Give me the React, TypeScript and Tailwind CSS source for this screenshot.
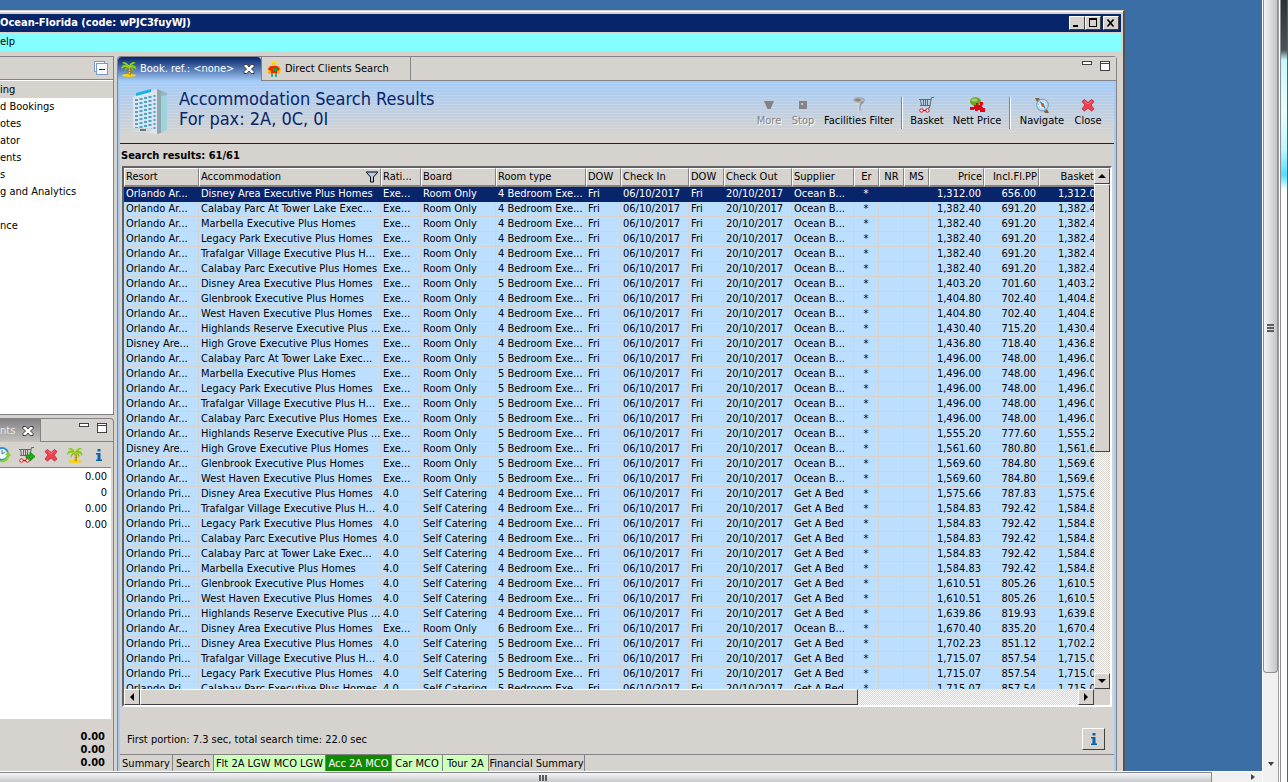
import type { ReactNode } from "react";
import clsx from "clsx";

type Row = {
  resort: string;
  name: string;
  rating: string;
  board: string;
  beds: number;
  supplier: string;
  price: string;
  pp: string;
};

const AR = "Orlando Ar...";
const PRI = "Orlando Pri...";
const DIS = "Disney Are...";

const DISNEY = "Disney Area Executive Plus Homes";
const TOWER = "Calabay Parc At Tower Lake Exec...";
const MARBELLA = "Marbella Executive Plus Homes";
const LEGACY = "Legacy Park Executive Plus Homes";
const TRAFALGAR = "Trafalgar Village Executive Plus H...";
const CALABAY = "Calabay Parc Executive Plus Homes";
const GLENBROOK = "Glenbrook Executive Plus Homes";
const WEST = "West Haven Executive Plus Homes";
const HIGHLANDS = "Highlands Reserve Executive Plus ...";
const GROVE = "High Grove Executive Plus Homes";

function ocean(resort: string, name: string, beds: number, price: string, pp: string): Row {
  return { resort, name, rating: "Exe...", board: "Room Only", beds, supplier: "Ocean B...", price, pp };
}

function getABed(name: string, beds: number, price: string, pp: string): Row {
  return { resort: PRI, name, rating: "4.0", board: "Self Catering", beds, supplier: "Get A Bed", price, pp };
}

const rows: Row[] = [
  ocean(AR, DISNEY, 4, "1,312.00", "656.00"),
  ocean(AR, TOWER, 4, "1,382.40", "691.20"),
  ocean(AR, MARBELLA, 4, "1,382.40", "691.20"),
  ocean(AR, LEGACY, 4, "1,382.40", "691.20"),
  ocean(AR, TRAFALGAR, 4, "1,382.40", "691.20"),
  ocean(AR, CALABAY, 4, "1,382.40", "691.20"),
  ocean(AR, DISNEY, 5, "1,403.20", "701.60"),
  ocean(AR, GLENBROOK, 4, "1,404.80", "702.40"),
  ocean(AR, WEST, 4, "1,404.80", "702.40"),
  ocean(AR, HIGHLANDS, 4, "1,430.40", "715.20"),
  ocean(DIS, GROVE, 4, "1,436.80", "718.40"),
  ocean(AR, TOWER, 5, "1,496.00", "748.00"),
  ocean(AR, MARBELLA, 5, "1,496.00", "748.00"),
  ocean(AR, LEGACY, 5, "1,496.00", "748.00"),
  ocean(AR, TRAFALGAR, 5, "1,496.00", "748.00"),
  ocean(AR, CALABAY, 5, "1,496.00", "748.00"),
  ocean(AR, HIGHLANDS, 5, "1,555.20", "777.60"),
  ocean(DIS, GROVE, 5, "1,561.60", "780.80"),
  ocean(AR, GLENBROOK, 5, "1,569.60", "784.80"),
  ocean(AR, WEST, 5, "1,569.60", "784.80"),
  getABed(DISNEY, 4, "1,575.66", "787.83"),
  getABed(TRAFALGAR, 4, "1,584.83", "792.42"),
  getABed(LEGACY, 4, "1,584.83", "792.42"),
  getABed(CALABAY, 4, "1,584.83", "792.42"),
  getABed("Calabay Parc at Tower Lake Exec...", 4, "1,584.83", "792.42"),
  getABed(MARBELLA, 4, "1,584.83", "792.42"),
  getABed(GLENBROOK, 4, "1,610.51", "805.26"),
  getABed(WEST, 4, "1,610.51", "805.26"),
  getABed(HIGHLANDS, 4, "1,639.86", "819.93"),
  ocean(AR, DISNEY, 6, "1,670.40", "835.20"),
  getABed(DISNEY, 5, "1,702.23", "851.12"),
  getABed(TRAFALGAR, 5, "1,715.07", "857.54"),
  getABed(LEGACY, 5, "1,715.07", "857.54"),
  getABed(CALABAY, 5, "1,715.07", "857.54"),
];

const columns = [
  { label: "Resort", width: "w-[75px]" },
  { label: "Accommodation", width: "w-[182px]", filter: true },
  { label: "Rati...", width: "w-[40px]" },
  { label: "Board", width: "w-[75px]" },
  { label: "Room type", width: "w-[90px]" },
  { label: "DOW", width: "w-[35px]" },
  { label: "Check In", width: "w-[68px]" },
  { label: "DOW", width: "w-[35px]" },
  { label: "Check Out", width: "w-[68px]" },
  { label: "Supplier", width: "w-[62px]" },
  { label: "Er", width: "w-[25px]", align: "text-center" },
  { label: "NR", width: "w-[25px]", align: "text-center" },
  { label: "MS", width: "w-[25px]", align: "text-center" },
  { label: "Price", width: "w-[55px]", align: "text-right" },
  { label: "Incl.Fl.PP", width: "w-[55px]", align: "text-right" },
  { label: "Basket P", width: "w-[66px]", align: "text-right" },
];

const RAISED = "border border-t-white border-l-white border-r-[#424142] border-b-[#424142] bg-[#d6d3ce]";
const DITHER = "bg-[repeating-conic-gradient(#ffffff_0_25%,#d6d3ce_0_50%)] bg-[length:2px_2px]";

/* ---------- icons ---------- */

function PalmIcon() {
  return (
    <svg viewBox="0 0 16 16" className="h-4 w-4 shrink-0" aria-hidden="true">
      <ellipse cx="8" cy="14.4" rx="7" ry="1.6" fill="#f7d308" />
      <path d="M8 5c1 3 1.200 6 .6 9" stroke="#b57900" strokeWidth="2" fill="none" />
      <path d="M8.300 6v8" stroke="#ffdb21" strokeWidth="1" fill="none" strokeDasharray="1.500 1" />
      <path
        d="M8 5C6 1 3 0 1 2c2 0 3 1 4 2-3-1-5 1-5 4 2-2 4-2 6-2-2 1-3 3-2 5 1-3 3-4 4-5 2 1 3 2 4 5 1-3 0-4-2-5 2 0 4 1 5 3 1-3-1-5-4-5 1-1 2-2 4-2-2-2-5-1-7 3z"
        fill="#7bc308"
      />
      <path d="M2 2c2 0 4 1 6 3 1-2 3-3 5-3M1 7c2-2 5-2 7-1 2-1 4 0 6 1" stroke="#a5e321" strokeWidth=".8" fill="none" />
    </svg>
  );
}

function PersonIcon() {
  return (
    <svg viewBox="0 0 16 16" className="h-4 w-4 shrink-0" aria-hidden="true">
      <path d="M3 5h10l2 4-1 3-3 1H5l-3-1-1-3z" fill="#ffa21c" />
      <path d="M5 5h6l3 3-2 2-1-1v3H5V9l-1 1-2-2z" fill="#e72800" />
      <path d="M6 2h4v3H6z" fill="#ffc34a" />
      <path d="M5 2 6 0h4l1 2z" fill="#ffdf00" />
      <path d="M7 7h4v3H7z" fill="#319a31" />
      <path d="M5 12h2v4H5zM9 12h2v4H9z" fill="#21b2b5" />
      <path d="M1 9h2v2H1zM13 9h2v2h-2zM7 12h2v2H7z" fill="#ffdf00" />
    </svg>
  );
}

function HotelIcon() {
  return (
    <svg viewBox="0 0 34 46" className="h-[46px] w-[34px] shrink-0" aria-hidden="true">
      <path d="M0 9 24 1v45L0 43z" fill="#dbe5ea" />
      <path d="m24 1 10 4v37l-10 4z" fill="#8fbac4" />
      <path d="m24 1 4 2v42l-4 1z" fill="#93a5ad" />
      <path d="m28 8 6-1v35l-6 2z" fill="#9fdbe3" opacity=".8" />
      <path d="m3 5 15-4v3L3 8z" fill="#18b2ef" />
      <g fill="none" stroke="#4aa3d3" strokeWidth="3" strokeDasharray="2 2">
        <path d="M3.500 11v30" />
        <path d="M8 10v31" />
        <path d="M12.500 9v32" />
        <path d="M17 8v33" />
        <path d="M21.500 7v35" strokeWidth="2" />
      </g>
      <path d="M0 40h18v4L0 43z" fill="#ced7dc" />
      <path d="M7 41h6v2H7z" fill="#6b757b" />
    </svg>
  );
}

function CartIcon({ arrow = false }: { arrow?: boolean }) {
  return (
    <svg viewBox="0 0 16 16" className="h-4 w-4 shrink-0" aria-hidden="true">
      <path
        d="M0 2.500h12M1 8.500h10M1.500 2.500l1 6M4.500 2.500v6M6.500 2.500v6M8.500 2.500v6M15 .5h-2.500l-2 10.500H9"
        stroke="#63696b"
        fill="none"
      />
      <circle cx="2.500" cy="13.500" r="1.700" fill="#fff" stroke="#e70000" />
      <circle cx="8.500" cy="13.500" r="1.700" fill="#fff" stroke="#e70000" />
      <path d="M4 13.500h3" stroke="#e70000" />
      {arrow ? <path d="M7 8h4V5l5 4.500-5 4.500v-3H7z" fill="#18b210" stroke="#007900" strokeWidth=".7" /> : null}
    </svg>
  );
}

function RedCross() {
  return (
    <svg viewBox="0 0 16 16" className="h-4 w-4 shrink-0" aria-hidden="true">
      <path
        d="m4.500 2.500 3.500 3 3.500-3 2.500 2-3 3.500 3 4-2.500 2-3.500-3-3.500 3-2.500-2 3-4-3-3.500z"
        fill="#ef4152"
        stroke="#c62031"
        strokeWidth=".8"
      />
      <path d="m4.500 4 3.500 3 3.500-3" stroke="#f77982" fill="none" />
    </svg>
  );
}

function InfoIcon() {
  return (
    <svg viewBox="0 0 16 16" className="h-4 w-4 shrink-0" aria-hidden="true">
      <path d="M6.500 2h3v2.500h-3zM5 6h4.500v6.500H11V14H5v-1.500h1.500v-5H5z" fill="#0865ad" />
    </svg>
  );
}

function ClockIcon() {
  return (
    <svg viewBox="0 0 16 16" className="h-4 w-4 shrink-0" aria-hidden="true">
      <circle cx="7" cy="7" r="6" fill="#f7fbff" stroke="#2992e7" strokeWidth="2" />
      <path d="M7 3v4l3-2" stroke="#4a7194" fill="none" />
      <path d="M1 12c5 3 10 1 11-4h-2l3.500-4L16 9h-1.500c-1 6-8 9-13.500 3z" fill="#8cd321" />
    </svg>
  );
}

function FunnelIcon() {
  return (
    <svg viewBox="0 0 16 16" className="h-4 w-4" aria-hidden="true">
      <path d="M3 3c0 3 3.500 4 3.500 6v6l2-1V9c0-2 4.500-3 4.500-6z" fill="#d6d7d6" />
      <path d="M8.500 8v6l1-.5V9c0-2 4-3 4-6l-3 1z" fill="#8c8e8c" />
      <ellipse cx="8" cy="3" rx="5.500" ry="2.400" fill="#b5b6b5" stroke="#9c9a9c" strokeWidth=".7" />
      <ellipse cx="7" cy="3" rx="3" ry="1.200" fill="#848284" />
    </svg>
  );
}

function NettPriceIcon() {
  return (
    <svg viewBox="0 0 16 16" className="h-4 w-4" aria-hidden="true">
      <ellipse cx="6.500" cy="4.500" rx="5.500" ry="4.200" fill="#6ba621" />
      <ellipse cx="5.500" cy="3" rx="3" ry="1.500" fill="#a5cf6b" />
      <path d="M1 10h4V8h2V6h2v2h2V5h3v3h-1v2h1v1h2v4h-5v-2H9v1H6v-2H5v1H1z" fill="#e70018" />
      <path d="m5 12 2-2M10 8v3m2 1 1 1" stroke="#8c1010" strokeWidth=".8" />
    </svg>
  );
}

function CompassIcon() {
  return (
    <svg viewBox="0 0 16 16" className="h-4 w-4" aria-hidden="true">
      <path d="M1 1h4l2 3-3 3zM15 16h-4l-2-3 3-3z" fill="#846139" />
      <circle cx="8.500" cy="8" r="5.800" fill="#e7f3fb" stroke="#8ca6bd" strokeWidth="1.400" />
      <circle cx="8.500" cy="8" r="4" fill="none" stroke="#5ab6e7" strokeWidth=".8" strokeDasharray="2 1" />
      <path d="m5.500 4 4.500 3-2 2z" fill="#1882ce" />
      <path d="m11.500 12-3.500-3 2-2z" fill="#1882ce" />
      <path d="M7.500 6.500h2.500v3H7.500z" fill="#f74a21" />
    </svg>
  );
}

function TabClose() {
  return (
    <svg viewBox="0 0 12 12" className="h-3 w-3" aria-hidden="true">
      <path
        d="M1 1.500h3l2 2.500 2-2.500h3v2L8.500 6l2.500 2.500v2H8L6 8l-2 2.500H1v-2L3.500 6 1 3.500z"
        fill="#fff"
        stroke="#424142"
      />
    </svg>
  );
}

function ViewControls() {
  return (
    <div className="flex items-start gap-2">
      <button type="button" aria-label="Minimize view" className="mt-1 block h-1 w-[10px] border border-[#424142] bg-white" />
      <button
        type="button"
        aria-label="Maximize view"
        className="mt-1 flex h-[10px] w-[10px] flex-col border border-[#424142] bg-white pt-px"
      >
        <span className="h-px w-full bg-[#424142]" />
      </button>
    </div>
  );
}

/* ---------- title bar ---------- */

function WindowButton({ label, children }: { label: string; children: ReactNode }) {
  return (
    <button type="button" aria-label={label} className={clsx("flex h-[14px] w-4 items-center justify-center", RAISED)}>
      <svg viewBox="0 0 12 10" className="h-[10px] w-3" fill="none" stroke="#000" shapeRendering="crispEdges">
        {children}
      </svg>
    </button>
  );
}

function TitleBar() {
  return (
    <div className="flex h-[18px] items-center bg-[#08246b] pr-[2px] text-white">
      <h1 className="flex-1 text-[11px] font-bold">Ocean-Florida (code: wPJC3fuyWJ)</h1>
      <WindowButton label="Minimize">
        <path d="M2 8h5" strokeWidth="2" />
      </WindowButton>
      <WindowButton label="Maximize">
        <path d="M2 1h8" strokeWidth="2" />
        <path d="M2.500 1v7.500h7V1" />
      </WindowButton>
      <div className="w-[2px]" />
      <WindowButton label="Close">
        <path d="m2.500 1.500 6 7m0-7-6 7" strokeWidth="1.700" shapeRendering="auto" />
      </WindowButton>
    </div>
  );
}

/* ---------- left column ---------- */

const navItems = ["ing", "d Bookings", "otes", "ator", "ents", "s", "g and Analytics", "", "nce"];

function NavigationView() {
  return (
    <section className="flex h-[359px] shrink-0 flex-col border-y border-r border-[#848284] bg-white">
      <div className="flex h-[23px] items-center justify-end border-b border-[#848284] bg-[#d6d3ce] pr-[5px]">
        <button type="button" aria-label="Collapse all">
          <svg viewBox="0 0 14 14" className="h-[14px] w-[14px]" fill="#f7fbff" stroke="#7b9ac6" shapeRendering="crispEdges">
            <path d="M.5.5h10v10H.5z" />
            <path d="M2.500 2.500h11v11h-11z" />
            <path d="M5 8h6" stroke="#08387b" />
          </svg>
        </button>
      </div>
      <ul className="pt-px">
        {navItems.map((item, i) => (
          <li key={i} className={clsx("h-[17px] leading-[18px]", i === 0 && "bg-[#d6d3ce]")}>
            {item}
          </li>
        ))}
      </ul>
    </section>
  );
}

function ElementsView() {
  return (
    <section className="flex min-h-0 flex-1 flex-col rounded-tr border-t border-r border-[#848284]">
      <div className="flex h-[23px] shrink-0">
        <div className="flex w-[41px] items-center gap-[7px] border-r border-[#848284] bg-linear-to-b from-[#848284] to-[#c6c3bd] text-[#e7e7e7]">
          <span>nts</span>
          <button type="button" aria-label="Close tab">
            <TabClose />
          </button>
        </div>
        <div className="flex flex-1 justify-end border-b border-[#848284] pr-[6px]">
          <ViewControls />
        </div>
      </div>
      <div className="mr-[2px] flex h-[26px] shrink-0 items-center justify-end gap-2 overflow-hidden border-b border-[#848284] pr-1">
        <button type="button" aria-label="History"><ClockIcon /></button>
        <button type="button" aria-label="Add to basket"><CartIcon arrow /></button>
        <button type="button" aria-label="Remove"><RedCross /></button>
        <button type="button" aria-label="Holiday"><PalmIcon /></button>
        <button type="button" aria-label="Info"><InfoIcon /></button>
      </div>
      <div className="mr-[2px] flex-1 bg-white pt-px pr-1 text-right leading-4">
        <p>0.00</p>
        <p>0</p>
        <p>0.00</p>
        <p>0.00</p>
      </div>
      <div className="mr-2 h-[52px] shrink-0 pt-[11px] text-right leading-[13px] font-bold">
        <p>0.00</p>
        <p>0.00</p>
        <p>0.00</p>
      </div>
    </section>
  );
}

/* ---------- main editor ---------- */

function EditorTabs() {
  return (
    <div className="flex h-6 shrink-0 text-[11px]">
      <div className="flex w-[143px] items-center gap-[3px] rounded-tl rounded-tr bg-linear-to-b from-[#08246b] to-[#a5cbf7] pl-[3px] text-white">
        <PalmIcon />
        <span className="flex-1 whitespace-nowrap">Book. ref.: &lt;none&gt;</span>
        <button type="button" aria-label="Close tab" className="mr-[6px]">
          <TabClose />
        </button>
      </div>
      <button
        type="button"
        className="flex w-[150px] items-center gap-[3px] border-r border-b border-l border-[#848284] bg-[#d6d3ce] pl-1 whitespace-nowrap"
      >
        <PersonIcon />
        Direct Clients Search
      </button>
      <div className="flex flex-1 justify-end border-b border-[#848284] bg-[#d6d3ce] pr-[6px]">
        <ViewControls />
      </div>
    </div>
  );
}

function ToolButton({ label, width, icon, disabled }: { label: string; width: string; icon: ReactNode; disabled?: boolean }) {
  return (
    <button
      type="button"
      disabled={disabled}
      className={clsx(
        "flex flex-col items-center whitespace-nowrap",
        width,
        disabled && "text-[#848284] [text-shadow:1px_1px_0_#ffffff]",
      )}
    >
      <span className="flex h-[17px] items-center">{icon}</span>
      <span className="leading-4">{label}</span>
    </button>
  );
}

function ToolSeparator() {
  return <div className="mx-[3px] h-8 w-[2px] border-l border-[#848284] border-r border-r-white" />;
}

function ResultsHeader() {
  return (
    <header className="flex h-[63px] shrink-0 items-start border-b border-[#08246b] bg-[repeating-linear-gradient(to_bottom,transparent_0_2px,rgba(255,255,255,0.120)_2px_3px),linear-gradient(to_bottom,#a5cbf7,#d6d3ce_90%)] pl-[13px]">
      <div className="pt-[7px]">
        <HotelIcon />
      </div>
      <h2 className="flex-1 pt-2 pl-3 text-[18px] leading-5 whitespace-nowrap text-[#08246b]">
        Accommodation Search Results
        <br />
        For pax: 2A, 0C, 0I
      </h2>
      <div className="flex shrink-0 items-center pt-[15px] pr-2">
        <ToolButton
          label="More"
          width="w-[34px]"
          disabled
          icon={
            <svg viewBox="0 0 10 10" className="h-[10px] w-[10px]">
              <path d="M0 1h10L6.500 9h-3z" fill="#848284" />
            </svg>
          }
        />
        <ToolButton
          label="Stop"
          width="w-[34px]"
          disabled
          icon={
            <svg viewBox="0 0 8 8" className="h-2 w-2">
              <path d="M0 0h8v8H0z" fill="#848284" />
              <path d="M2 2h2v2H2z" fill="#bdc7d6" />
            </svg>
          }
        />
        <ToolButton label="Facilities Filter" width="w-[78px]" icon={<FunnelIcon />} />
        <ToolSeparator />
        <ToolButton label="Basket" width="w-[42px]" icon={<CartIcon />} />
        <ToolButton label="Nett Price" width="w-[58px]" icon={<NettPriceIcon />} />
        <ToolSeparator />
        <ToolButton label="Navigate" width="w-[56px]" icon={<CompassIcon />} />
        <ToolButton label="Close" width="w-[36px]" icon={<RedCross />} />
      </div>
    </header>
  );
}

function ScrollArrow({ label, path }: { label: string; path: string }) {
  return (
    <button type="button" aria-label={label} className={clsx("flex h-4 w-4 shrink-0 items-center justify-center", RAISED)}>
      <svg viewBox="0 0 8 8" className="h-2 w-2" aria-hidden="true">
        <path d={path} fill="#000" />
      </svg>
    </button>
  );
}

function ResultsTable() {
  return (
    <div className="mx-[2px] flex min-h-0 flex-1 flex-col border-2 border-t-[#636163] border-r-white border-b-white border-l-[#636163]">
      <div className="flex min-h-0 flex-1">
        <div className="min-w-0 flex-1 overflow-hidden bg-white">
          <table className="w-[981px] table-fixed border-separate border-spacing-0">
            <thead>
              <tr>
                {columns.map((c, i) => (
                  <th
                    key={i}
                    scope="col"
                    className={clsx(
                      "h-[19px] overflow-hidden border-t border-r border-b-2 border-l border-t-white border-r-[#848284] border-b-[#848284] border-l-white bg-[#d6d3ce] px-px py-0 leading-4 font-normal whitespace-nowrap",
                      c.width,
                      c.align ?? "text-left",
                    )}
                  >
                    {c.filter ? (
                      <span className="flex items-center justify-between">
                        {c.label}
                        <svg viewBox="0 0 14 12" className="h-3 w-[14px]" aria-hidden="true">
                          <path d="M1 1h12L8.500 6v5h-3V6z" fill="#b5cbe7" stroke="#000" />
                        </svg>
                      </span>
                    ) : (
                      c.label
                    )}
                  </th>
                ))}
              </tr>
            </thead>
            <tbody>
              {rows.map((r, i) => {
                const cells = [
                  r.resort,
                  r.name,
                  r.rating,
                  r.board,
                  `${r.beds} Bedroom Exe...`,
                  "Fri",
                  "06/10/2017",
                  "Fri",
                  "20/10/2017",
                  r.supplier,
                  "*",
                  "",
                  "",
                  r.price,
                  r.pp,
                  r.price,
                ];
                return (
                  <tr key={i} className={i === 0 ? "bg-[#08246b] text-white" : "bg-[#bddfff]"}>
                    {cells.map((cell, j) => (
                      <td
                        key={j}
                        className={clsx(
                          "h-[15px] overflow-hidden border-r border-b px-[2px] py-0 leading-[14px] whitespace-nowrap",
                          i === 0 ? "border-[#08246b]" : "border-[#d6d3ce]",
                          columns[j].align,
                        )}
                      >
                        {cell}
                      </td>
                    ))}
                  </tr>
                );
              })}
            </tbody>
          </table>
        </div>
        <div className={clsx("flex w-4 shrink-0 flex-col", DITHER)}>
          <ScrollArrow label="Scroll up" path="M0 6h8L4 2z" />
          <div className={clsx("h-[268px]", RAISED)} />
          <div className="flex-1" />
          <ScrollArrow label="Scroll down" path="M0 2h8L4 6z" />
        </div>
      </div>
      <div className="flex h-4 shrink-0">
        <div className={clsx("flex flex-1", DITHER)}>
          <ScrollArrow label="Scroll left" path="M6 0v8L2 4z" />
          <div className={clsx("w-[74%]", RAISED)} />
          <div className="flex-1" />
          <ScrollArrow label="Scroll right" path="M2 0v8l4-4z" />
        </div>
        <div className="w-4 bg-[#d6d3ce]" />
      </div>
    </div>
  );
}

const pageTabs = [
  { label: "Summary", width: "w-[53px]", tone: "" },
  { label: "Search", width: "w-[41px]", tone: "" },
  { label: "Flt 2A LGW MCO LGW", width: "w-[112px]", tone: "bg-[#ceffbd]" },
  { label: "Acc 2A MCO", width: "w-[66px]", tone: "bg-[#108a00] text-white" },
  { label: "Car MCO", width: "w-[51px]", tone: "bg-[#ceffbd]" },
  { label: "Tour 2A", width: "w-[46px]", tone: "bg-[#ceffbd]" },
  { label: "Financial Summary", width: "w-[96px]", tone: "" },
];

function Editor() {
  return (
    <main className="flex min-w-0 flex-1 flex-col rounded-t border-x border-t border-[#848284] bg-[#a5cbf7]">
      <EditorTabs />
      <div className="mx-[2px] flex min-h-0 flex-1 flex-col bg-[#d6d3ce]">
        <ResultsHeader />
        <p className="h-[22px] shrink-0 pl-px leading-6 font-bold">Search results: 61/61</p>
        <ResultsTable />
        <div className="flex h-[47px] shrink-0 items-end justify-between pr-[9px] pb-1 pl-[7px]">
          <p className="pb-[2px] leading-4">First portion: 7.3 sec, total search time: 22.0 sec</p>
          <button type="button" aria-label="Search info" className={clsx("flex h-[22px] w-[23px] items-center justify-center", RAISED)}>
            <InfoIcon />
          </button>
        </div>
        <nav className="flex h-[17px] shrink-0 border-t border-[#848284]">
          {pageTabs.map((t) => (
            <button
              key={t.label}
              type="button"
              className={clsx("border-r border-[#848284] pt-px leading-4 whitespace-nowrap", t.width, t.tone)}
            >
              {t.label}
            </button>
          ))}
        </nav>
      </div>
    </main>
  );
}

/* ---------- viewer scroll bars ---------- */

function ViewerScrollX() {
  return (
    <div className="flex h-[11px] shrink-0 items-center border-t border-white bg-[#f0f0f0]">
      <div className="flex h-full w-[96%] items-center justify-center border-t border-r border-[#848689] bg-linear-to-b from-[#f5f5f7] to-[#c6cacd]">
        <span className="mr-[125px] flex gap-px">
          <i className="h-[6px] w-[2px] bg-[#5a5d60]" />
          <i className="h-[6px] w-[2px] bg-[#5a5d60]" />
          <i className="h-[6px] w-[2px] bg-[#5a5d60]" />
        </span>
      </div>
      <div className="flex flex-1 justify-end pr-[7px]">
        <svg viewBox="0 0 4 6" className="h-[6px] w-1">
          <path d="M0 0v6l4-3z" fill="#424142" />
        </svg>
      </div>
    </div>
  );
}

function ViewerScrollY() {
  return (
    <div className="flex w-[17px] shrink-0 flex-col border-x border-l-white border-r-[#9c9ea0] bg-[#f0f0f0]">
      <div className="flex h-[86%] flex-col items-center rounded-b-sm border-x border-b border-[#8c8e91] bg-linear-to-r from-[#f3f3f5] to-[#c3c6ca] pt-[324px]">
        <span className="flex flex-col gap-px">
          <i className="h-[2px] w-[7px] bg-[#5a5d60]" />
          <i className="h-[2px] w-[7px] bg-[#5a5d60]" />
          <i className="h-[2px] w-[7px] bg-[#5a5d60]" />
        </span>
      </div>
      <div className="flex flex-1 flex-col items-center justify-end pb-4">
        <svg viewBox="0 0 6 4" className="h-1 w-[6px]">
          <path d="M0 0h6L3 4z" fill="#424142" />
        </svg>
      </div>
    </div>
  );
}

export default function App() {
  return (
    <div className="flex h-screen w-full overflow-hidden bg-[#3a6ea5] font-['DejaVu_Sans_Condensed','Noto_Sans',sans-serif] text-[11px] leading-4 text-black">
      <div className="flex min-w-0 flex-1 flex-col">
        <div className="flex min-h-0 flex-1 pt-[10px] pr-[137px]">
          <div className="flex min-w-0 flex-1 flex-col border-t border-r-2 border-t-[#d6d3ce] border-r-[#525152] bg-[#d6d3ce]">
            <div className="border-t border-white pt-[2px] pr-[2px]">
              <TitleBar />
              <div className="mt-px h-[18px] bg-[#84ffff] leading-[18px]">
                <button type="button">elp</button>
              </div>
            </div>
            <div className="flex min-h-0 flex-1 gap-[3px] pt-[5px] pr-[6px]">
              <div className="flex w-[114px] shrink-0 flex-col gap-[3px] overflow-hidden">
                <NavigationView />
                <ElementsView />
              </div>
              <Editor />
            </div>
          </div>
        </div>
        <ViewerScrollX />
      </div>
      <ViewerScrollY />
      <div className="flex w-[9px] shrink-0 border-x border-l-white border-r-[#5a6163] bg-[linear-gradient(to_bottom,#2b3238_0,#4a5358_50px,#c6f7ff_60px,#e7ffff_110px,#bdf7ff_150px,#52dfff_175px,#ffffff_190px)]">
        <div className="w-px bg-[#8c8e91]" />
      </div>
    </div>
  );
}
